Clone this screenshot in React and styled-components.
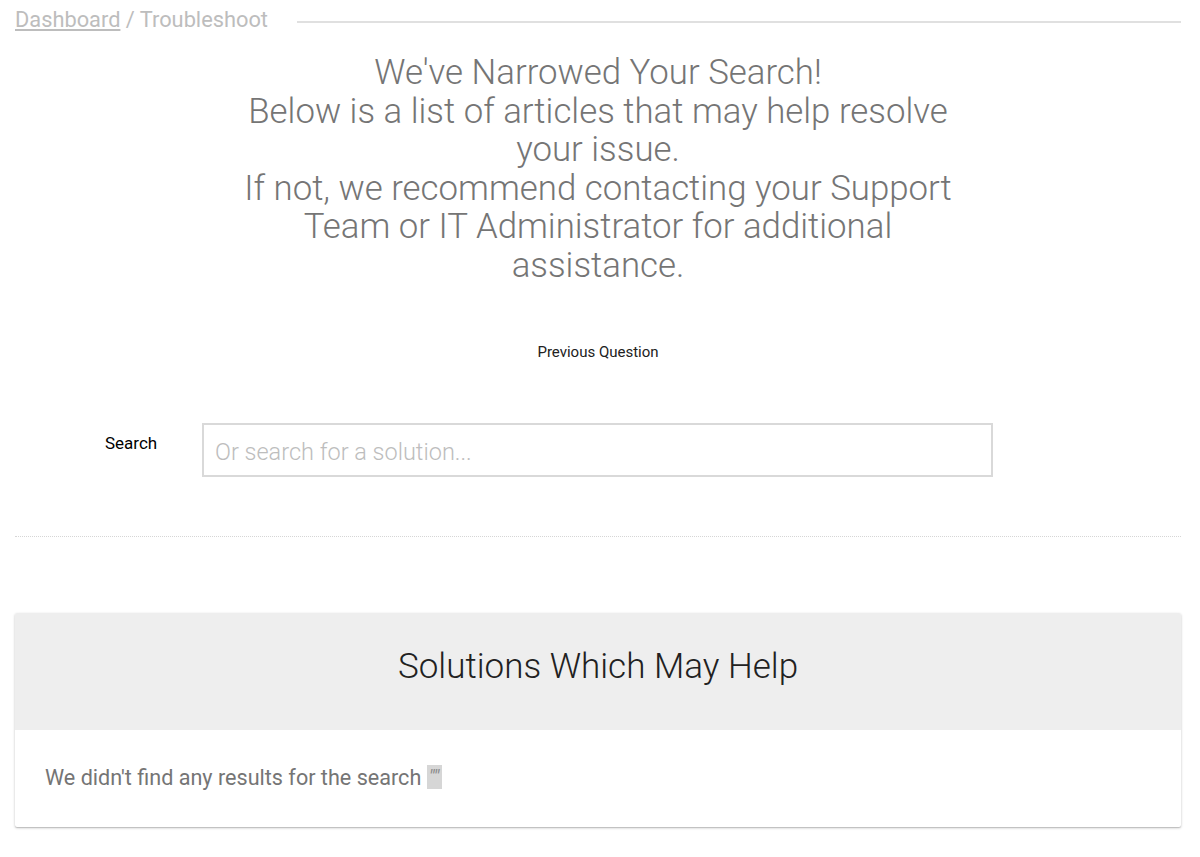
import React from "react"
import styled, { createGlobalStyle } from "styled-components"

const GlobalStyle = createGlobalStyle`
  body {
    margin: 0;
    background: #fff;
    font-family: Roboto, "Liberation Sans", sans-serif;
  }
`

const Troubleshoot = () => {
  return (
    <Page>
      <GlobalStyle />
      <Breadcrumb>
        <Crumbs>
          <a href="#">Dashboard</a> / Troubleshoot
        </Crumbs>
        <Rule />
      </Breadcrumb>

      <Intro>
        We've Narrowed Your Search!
        <br />
        Below is a list of articles that may help resolve your issue.
        <br />
        If not, we recommend contacting your Support Team or IT Administrator for additional assistance.
      </Intro>

      <PrevButton>Previous Question</PrevButton>

      <SearchRow>
        <SearchLabel htmlFor="search">Search</SearchLabel>
        <SearchInput id="search" placeholder="Or search for a solution..." />
      </SearchRow>

      <Divider />

      <Card>
        <CardHeader>Solutions Which May Help</CardHeader>
        <CardBody>
          We didn't find any results for the search <Query>""</Query>
        </CardBody>
      </Card>
    </Page>
  )
}

const Page = styled.div`
  padding: 0 19px 40px 15px;
`

const Breadcrumb = styled.div`
  display: flex;
  align-items: center;
  height: 40px;
`

const Crumbs = styled.div`
  font-size: 21.8px;
  color: #bdbdbd;
  white-space: nowrap;
  margin-top: -1px;

  a {
    color: #bdbdbd;
    text-decoration: underline;
  }
`

const Rule = styled.div`
  flex: 1;
  height: 2px;
  background: #e0e0e0;
  margin-left: 29px;
  margin-top: 3px;
`

const Intro = styled.h1`
  max-width: 720px;
  margin: 13px auto 0;
  text-align: center;
  font-size: 34.8px;
  line-height: 38.5px;
  font-weight: 300;
  color: #757575;
`

const PrevButton = styled.button`
  display: block;
  margin: 55px auto 0;
  background: none;
  border: none;
  padding: 4px 8px;
  font-family: Roboto, "Liberation Sans", sans-serif;
  font-size: 15px;
  color: #212121;
  cursor: pointer;
`

const SearchRow = styled.div`
  display: flex;
  align-items: flex-start;
  margin-top: 58px;
`

const SearchLabel = styled.label`
  width: 187px;
  padding: 10px 0 0 90px;
  box-sizing: border-box;
  font-size: 17px;
  color: #000;
`

const SearchInput = styled.input`
  width: 791px;
  height: 54px;
  box-sizing: border-box;
  border: 2px solid #d9d9d9;
  padding: 4px 11px 0;
  font-family: Roboto, "Liberation Sans", sans-serif;
  font-size: 23.5px;
  font-weight: 300;
  color: #333;
  outline: none;

  &::placeholder {
    color: #bdbdbd;
  }
`

const Divider = styled.hr`
  margin: 59px 0 0;
  border: none;
  border-top: 1px dotted #d6d6d6;
`

const Card = styled.div`
  margin-top: 76px;
  border-radius: 2px;
  background: #fff;
  box-shadow: 0 1px 3px rgba(0, 0, 0, 0.2), 0 1px 1px rgba(0, 0, 0, 0.14);
  overflow: hidden;
`

const CardHeader = styled.h2`
  margin: 0;
  height: 117px;
  box-sizing: border-box;
  padding-bottom: 10px;
  display: flex;
  align-items: center;
  justify-content: center;
  background: #eeeeee;
  font-size: 35px;
  font-weight: 300;
  color: #212121;
`

const CardBody = styled.div`
  padding: 34px 30px 35px;
  font-size: 21.6px;
  line-height: 28px;
  color: #757575;
`

const Query = styled.code`
  display: inline-block;
  background: #d6d6d6;
  color: #8a8a8a;
  font-family: Roboto, "Liberation Sans", sans-serif;
  font-size: 19px;
  line-height: 24px;
  height: 24px;
  vertical-align: -4px;
  padding: 0 3px 0 2px;
  font-style: italic;
  overflow: hidden;
`

export default Troubleshoot
